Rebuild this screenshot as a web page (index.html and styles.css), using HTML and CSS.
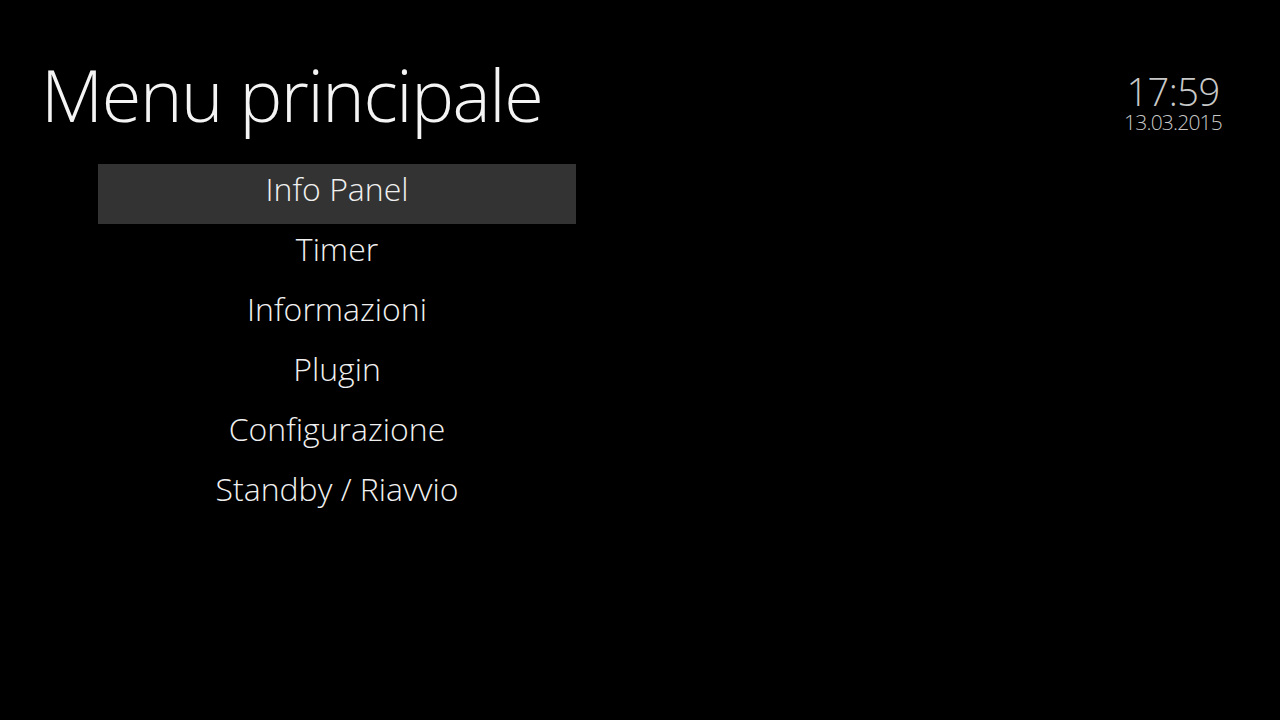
FILE: index.html
```html
<!DOCTYPE html>
<html lang="it">
<head>
<meta charset="utf-8">
<title>Menu principale</title>
<link rel="stylesheet" href="styles.css">
</head>
<body>
<div class="screen">
  <header class="top">
    <h1 class="title">Menu principale</h1>
    <div class="clock">
      <div class="time">17:59</div>
      <div class="date">13.03.2015</div>
    </div>
  </header>
  <ul class="menu">
    <li class="item selected">Info Panel</li>
    <li class="item">Timer</li>
    <li class="item">Informazioni</li>
    <li class="item">Plugin</li>
    <li class="item">Configurazione</li>
    <li class="item">Standby / Riavvio</li>
  </ul>
</div>
</body>
</html>
```
FILE: styles.css
```css
html, body {
  margin: 0;
  padding: 0;
  background: #000;
}
body {
  width: 1280px;
  height: 720px;
  overflow: hidden;
  font-family: "Open Sans", "Noto Sans", sans-serif;
  font-weight: 300;
  color: #f2f2f2;
}
.screen {
  display: flex;
  flex-direction: column;
  width: 1280px;
  height: 720px;
}
.top {
  display: flex;
  justify-content: space-between;
  align-items: flex-start;
  height: 164px;
  padding: 0 58px 0 41px;
  box-sizing: border-box;
}
.title {
  margin: 0;
  padding-top: 44px;
  font-size: 72px;
  font-weight: 300;
  line-height: 100px;
  letter-spacing: -1.4px;
  color: #f4f4f4;
}
.clock {
  display: flex;
  flex-direction: column;
  align-items: center;
  padding-top: 72px;
  color: #c8c8c8;
}
.time {
  font-size: 38px;
  line-height: 39px;
  letter-spacing: -0.5px;
}
.date {
  font-size: 21px;
  line-height: 22px;
  letter-spacing: -0.8px;
}
.menu {
  list-style: none;
  margin: 0 0 0 98px;
  padding: 0;
  width: 478px;
}
.item {
  height: 60px;
  line-height: 50px;
  text-align: center;
  font-size: 32px;
  color: #f0f0f0;
}
.selected {
  background: #333333;
}
```
